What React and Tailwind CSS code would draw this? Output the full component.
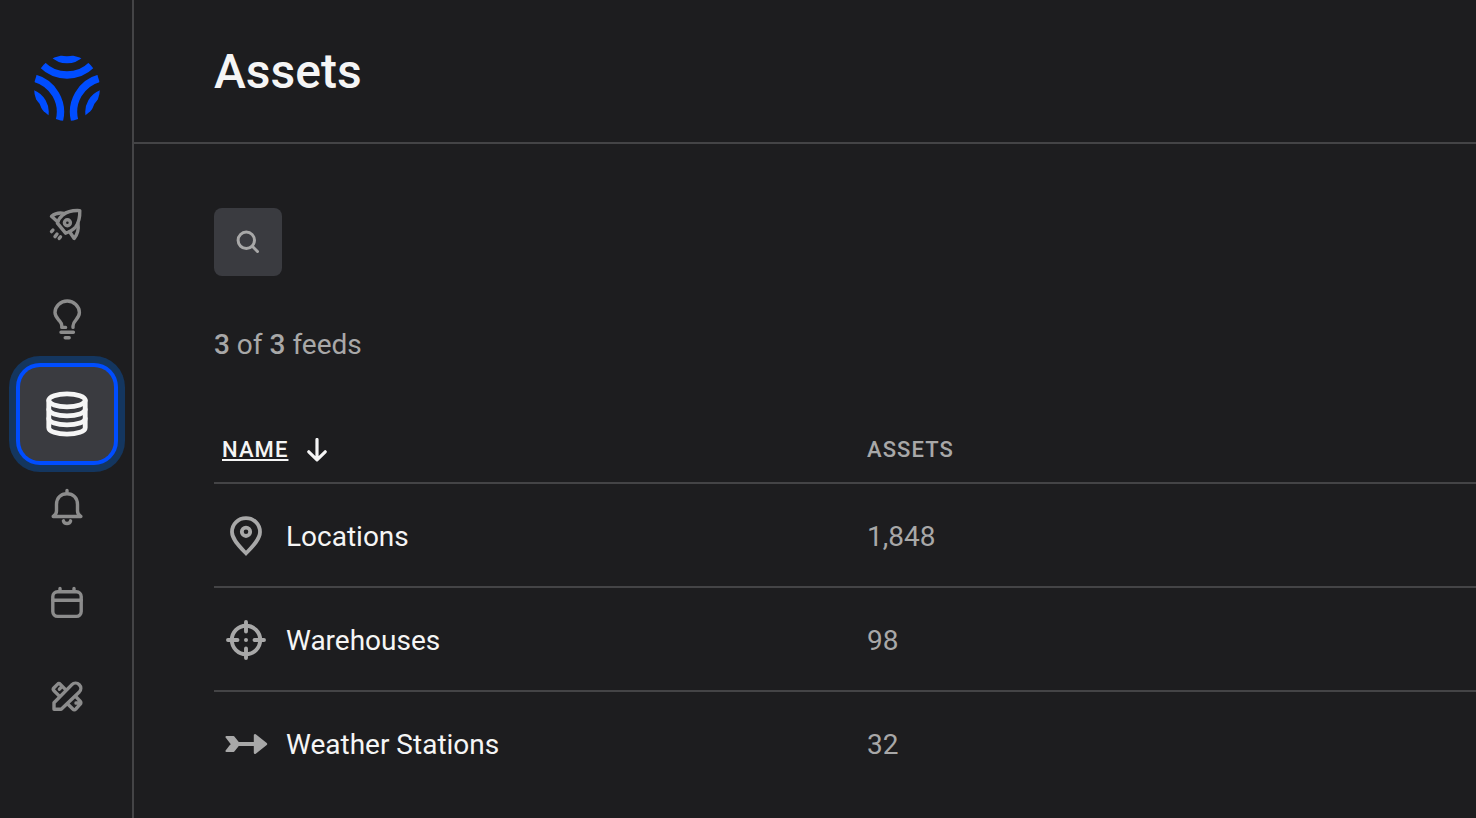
import React from 'react';
import clsx from 'clsx';

const Icon = ({ children, className }) => (
  <svg
    viewBox="0 0 48 48"
    fill="none"
    stroke="currentColor"
    strokeWidth="3.4"
    strokeLinecap="round"
    strokeLinejoin="round"
    aria-hidden="true"
    className={clsx('w-12 h-12 shrink-0', className)}
  >
    {children}
  </svg>
);

const RocketIcon = () => (
  <Icon>
    <path d="M36.8 8.6C30 8.2 24 9.6 20 12.8c-2.6 2.2-4.6 4.8-5.6 8.400L22.600 31.200c3.400-1.200 7.400-3 10-6.200 3-4 4.400-9.600 4.200-16.400Z" />
    <path d="M21 11.400c-5-1-9.500.4-12.500 2.900l5.500 5M35 21.500c.8 5.500-.6 10.900-3.800 15l-4.600-6.800" />
    <circle cx="24.4" cy="20.7" r="3" />
    <path d="M8.500 29.600l1.400-1.500M12 34.600l2-2.600M16.200 36.400l1.300-1.500" />
  </Icon>
);

const BulbIcon = () => (
  <Icon>
    <path d="M22.600 31.400h-3.800v-1.600c0-2.600-1.400-3.800-3.200-6-2-2.200-3.600-4.600-3.600-7.200A12.200 11.600 0 0 1 36.400 16.600c0 2.800-1.400 5-3.400 7.200-1.800 2-3 3.400-3 6.200v1.400" />
    <path d="M18 36.300h12.400M22.200 41.700h4" />
  </Icon>
);

const DatabaseIcon = () => (
  <Icon>
    <g strokeWidth="4.8">
      <ellipse cx="24" cy="10.3" rx="18.2" ry="6.5" />
      <path d="M5.800 10.300v27.400c0 3.600 8 6.500 18.200 6.500s18.200-2.900 18.200-6.500V10.300" />
      <path d="M5.800 19.300c0 3.600 8 6.500 18.200 6.500s18.200-2.900 18.200-6.500M5.800 28.400c0 3.600 8 6.500 18.200 6.500s18.200-2.900 18.200-6.500" />
    </g>
  </Icon>
);

const BellIcon = () => (
  <Icon>
    <path d="M24 6.400v3.200M10.200 32.500c2-1.300 3.300-3 3.300-5.500v-6.500c0-6.500 4.300-10.800 10.500-10.800s10.500 4.300 10.500 10.800V27c0 2.500 1.300 4.200 3.300 5.500Z" />
    <path d="M20.400 36.800c.4 1.800 1.800 2.700 3.600 2.700s3.200-.9 3.600-2.700" />
  </Icon>
);

const CalendarIcon = () => (
  <Icon>
    <rect x="9.8" y="13.8" width="28.4" height="24.6" rx="4.8" />
    <path d="M9.800 22.300h28.400M17 10.400v3M31 10.400v3" />
  </Icon>
);

const ToolsIcon = () => (
  <Icon>
    <path d="M11 37.200v-6.400L28.900 12.600c2-2 5.400-1.900 7.400.1s2 5.200 0 7.200L18.200 37.200Z" />
    <path d="M22.600 17.600l-5.200-5.200c-.9-.9-2.100-.9-3 0L11 15.800c-.9.900-.9 2.100 0 3l5.600 5.600M18.600 14.800l-2.200 2.400" />
    <path d="M32.600 24.400l4.600 4.800c.9.900.9 2.100 0 3l-4.400 4.800c-.9.900-2.100.9-3 0l-4.800-4.800M35.200 30.800l-2.200.2" />
  </Icon>
);

const PinIcon = () => (
  <Icon>
    <g strokeWidth="3.8" strokeLinejoin="miter">
      <path d="M24 41.300c-6-6.300-14-13.800-14-21.300C10 12 16.200 6.200 24 6.200S38 12 38 20c0 7.500-8 15-14 21.300Z" />
      <circle cx="24" cy="19.8" r="4.2" />
    </g>
  </Icon>
);

const CrosshairIcon = () => (
  <Icon>
    <g strokeWidth="3.9">
      <circle cx="24" cy="24" r="14.2" />
      <path d="M24 6v9.500M24 32.500V42M6 24h9.500M32.500 24H42" />
    </g>
    <circle cx="24" cy="24" r="2" fill="currentColor" stroke="none" />
  </Icon>
);

const ArrowIcon = () => (
  <Icon>
    <path d="M16 24h18" strokeWidth="4" />
    <path d="M33 15.300v17.400L44 24Z" fill="currentColor" strokeWidth="2.4" />
    <path d="M4.400 17h7.200l5.600 7-5.600 7H4.400l5.400-7Z" fill="currentColor" strokeWidth="2" />
  </Icon>
);

const Logo = () => (
  <svg viewBox="0 0 68 68" className="w-[68px] h-[68px]" fill="none" stroke="#004dff" aria-hidden="true">
    <clipPath id="logo-disc">
      <circle cx="34" cy="34" r="33" />
    </clipPath>
    <g clipPath="url(#logo-disc)">
      {[0, 120, 240].map((angle) => (
        <g key={angle} transform={`rotate(${angle} 34 34)`}>
          <circle cx="34" cy="-14" r="35" strokeWidth="7.4" />
          <circle cx="34" cy="-14" r="19.8" strokeWidth="7" />
        </g>
      ))}
    </g>
  </svg>
);

const navItems = [
  { label: 'Launch', icon: RocketIcon },
  { label: 'Insights', icon: BulbIcon },
  { label: 'Assets', icon: DatabaseIcon, active: true },
  { label: 'Alerts', icon: BellIcon },
  { label: 'Calendar', icon: CalendarIcon },
  { label: 'Tools', icon: ToolsIcon },
];

const feeds = [
  { name: 'Locations', assets: '1,848', icon: PinIcon },
  { name: 'Warehouses', assets: '98', icon: CrosshairIcon },
  { name: 'Weather Stations', assets: '32', icon: ArrowIcon },
];

const Sidebar = () => (
  <aside className="w-[134px] shrink-0 border-r-2 border-[#444446] pl-5 pt-[54px]">
    <div className="w-[94px] flex flex-col items-center">
      <a href="#home" aria-label="Home">
        <Logo />
      </a>
      <nav className="mt-[57px] flex flex-col">
        {navItems.map(({ label, icon: NavIcon, active }) => (
          <a
            key={label}
            href={`#${label.toLowerCase()}`}
            aria-label={label}
            aria-current={active ? 'page' : undefined}
            className={clsx(
              'w-[94px] h-[94px] flex items-center justify-center rounded-[20px]',
              active
                ? 'bg-[#3a3b40] text-[#f5f5f5] shadow-[0_0_0_4px_#004dff,0_0_0_11px_#14365f]'
                : 'text-[#8c8c8c]'
            )}
          >
            <NavIcon />
          </a>
        ))}
      </nav>
    </div>
  </aside>
);

const FeedTable = () => (
  <table className="mt-[57px] w-full table-fixed border-separate border-spacing-0 text-left">
    <thead>
      <tr className="h-[66px] text-[22px] leading-6">
        <th
          scope="col"
          aria-sort="descending"
          className="w-[645px] border-b-2 border-[#444446] px-2 font-medium"
        >
          <button type="button" className="flex items-center gap-[17px] text-[#f5f5f5]">
            <span className="underline decoration-2 underline-offset-2 tracking-wider">NAME</span>
            <svg
              viewBox="0 0 24 24"
              className="w-6 h-6"
              fill="none"
              stroke="currentColor"
              strokeWidth="3.2"
              strokeLinecap="round"
              strokeLinejoin="round"
              aria-hidden="true"
            >
              <path d="M12 1.500v20M3.800 13.800l8.200 8 8.200-8" />
            </svg>
          </button>
        </th>
        <th
          scope="col"
          className="border-b-2 border-[#444446] px-2 font-medium tracking-wider text-[#a8a8a8]"
        >
          ASSETS
        </th>
      </tr>
    </thead>
    <tbody className="text-[28px] leading-8 text-[#a8a8a8]">
      {feeds.map(({ name, assets, icon: FeedIcon }, i) => {
        const border = i < feeds.length - 1 ? 'border-[#444446]' : 'border-transparent';
        return (
          <tr key={name} className="h-[104px]">
            <td className={clsx('border-b-2 px-2 pt-0.5', border)}>
              <div className="flex items-center gap-4">
                <FeedIcon />
                <span className="pt-0.5 text-[#f5f5f5]">{name}</span>
              </div>
            </td>
            <td className={clsx('border-b-2 px-2 pt-1', border)}>{assets}</td>
          </tr>
        );
      })}
    </tbody>
  </table>
);

const App = () => {
  return (
    <div className="min-h-screen flex bg-[#1d1d1f] font-[Roboto,sans-serif] text-[#f5f5f5]">
      <Sidebar />
      <div className="flex-1 min-w-0">
        <header className="h-36 flex items-center border-b-2 border-[#444446] pl-20 pt-0.5">
          <h1 className="text-5xl font-medium">Assets</h1>
        </header>
        <main className="pl-20 pt-16">
          <button
            type="button"
            aria-label="Search"
            className="w-[68px] h-[68px] flex items-center justify-center rounded-lg bg-[#3a3b40] text-[#a8a8a8]"
          >
            <svg
              viewBox="0 0 24 24"
              className="w-6 h-6"
              fill="none"
              stroke="currentColor"
              strokeWidth="3"
              strokeLinecap="round"
              aria-hidden="true"
            >
              <circle cx="10.3" cy="10.3" r="8.2" />
              <path d="M16.300 16.300l5.200 5.200" />
            </svg>
          </button>
          <p className="mt-[53px] text-[28px] leading-8 text-[#a8a8a8]">
            <b className="font-medium">3</b> of <b className="font-medium">3</b> feeds
          </p>
          <FeedTable />
        </main>
      </div>
    </div>
  );
};

export default App;
